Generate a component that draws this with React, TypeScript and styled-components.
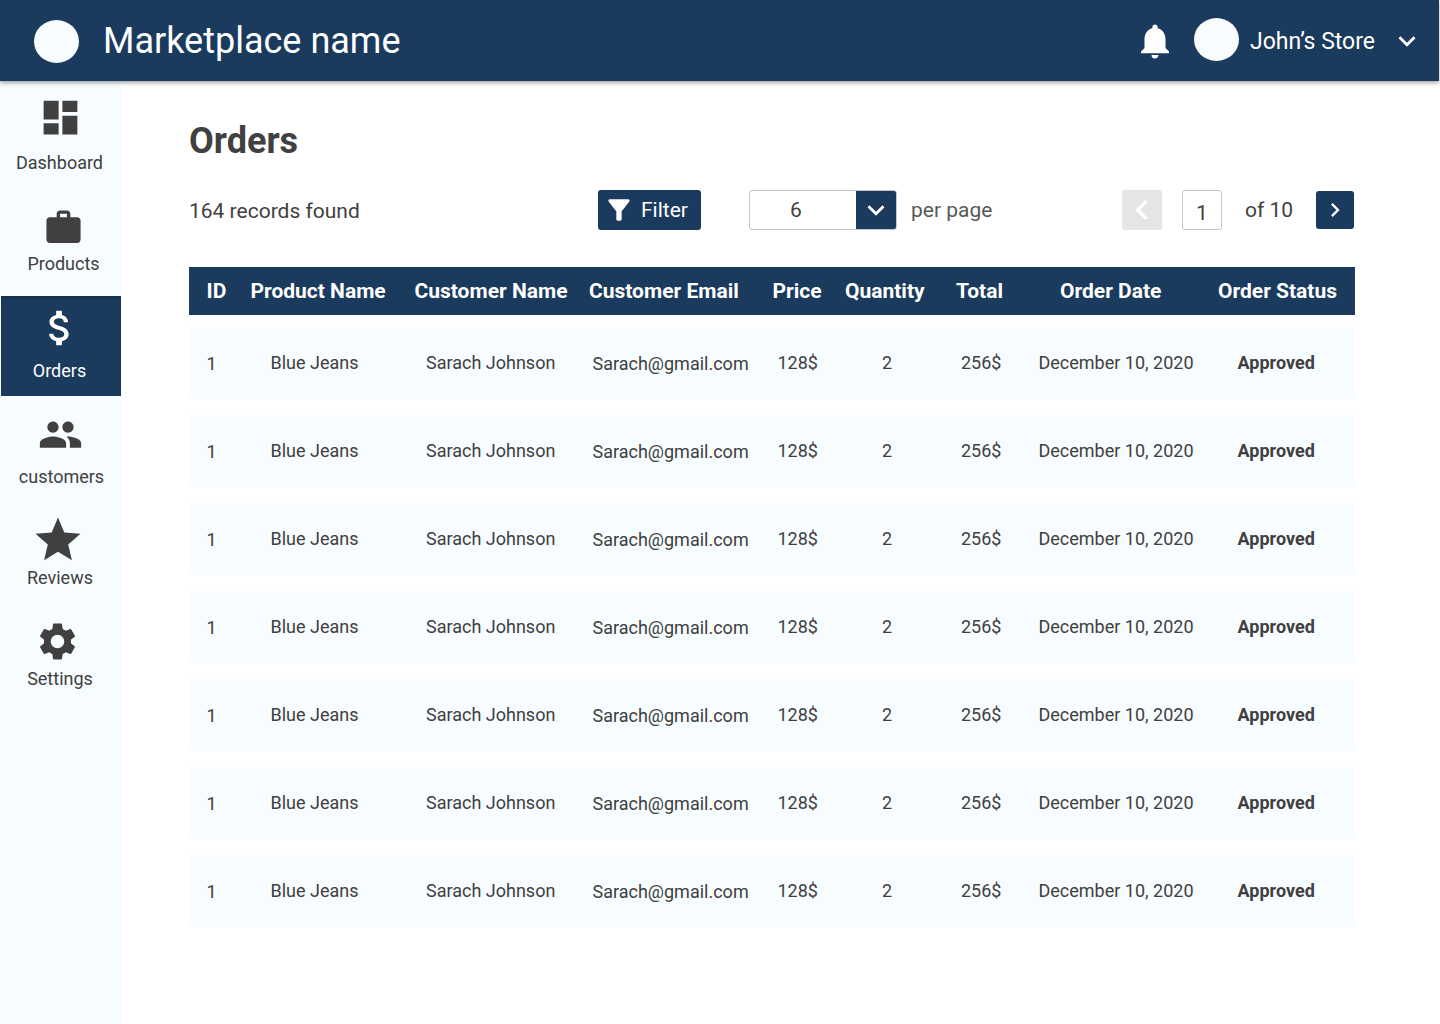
import React from 'react';
import styled, { createGlobalStyle } from 'styled-components';
import {
  MdAttachMoney,
  MdChevronLeft,
  MdChevronRight,
  MdDashboard,
  MdFilterAlt,
  MdKeyboardArrowDown,
  MdNotifications,
  MdPeople,
  MdSettings,
  MdStar,
  MdWork,
} from 'react-icons/md';

const navy = '#1A3A5E';
const ink = '#404040';
const tint = '#F7FCFF';

const navItems = [
  { label: 'Dashboard', Icon: MdDashboard, size: 45, height: 114, top: 14, gap: 11, iconShift: 0, labelShift: -2 },
  { label: 'Products', Icon: MdWork, size: 41, height: 101, top: 12, gap: 4, iconShift: 6, labelShift: 6 },
  { label: 'Orders', Icon: MdAttachMoney, size: 46, height: 100, top: 9, gap: 8, iconShift: -2, labelShift: -3, active: true },
  { label: 'customers', Icon: MdPeople, size: 45, height: 101, top: 16, gap: 8, iconShift: 0, labelShift: 2 },
  { label: 'Reviews', Icon: MdStar, size: 54, height: 101, top: 16, gap: -1, iconShift: -6, labelShift: -1 },
  { label: 'Settings', Icon: MdSettings, size: 45, height: 101, top: 21, gap: 3, iconShift: -7, labelShift: -1 },
];

const headers = [
  'ID',
  'Product Name',
  'Customer Name',
  'Customer Email',
  'Price',
  'Quantity',
  'Total',
  'Order Date',
  'Order Status',
];

const orders = Array.from({ length: 7 }, () => ({
  id: '1',
  product: 'Blue Jeans',
  customer: 'Sarach Johnson',
  email: 'Sarach@gmail.com',
  price: '128$',
  quantity: '2',
  total: '256$',
  date: 'December 10, 2020',
  status: 'Approved',
}));

export default function App() {
  return (
    <>
      <GlobalStyle />
      <Page>
        <Header>
          <Brand>
            <BrandLogo />
            <BrandName>Marketplace name</BrandName>
          </Brand>
          <Account>
            <BellIcon size={42} />
            <StoreAvatar />
            <StoreName>John’s Store</StoreName>
            <MdKeyboardArrowDown size={34} />
          </Account>
        </Header>

        <Body>
          <Sidebar>
            {navItems.map(({ label, Icon, size, height, top, gap, iconShift, labelShift, active }) => (
              <NavItem key={label} $height={height} $top={top} $active={active}>
                <NavIcon $shift={iconShift}>
                  <Icon size={size} />
                </NavIcon>
                <NavLabel $gap={gap} $shift={labelShift}>
                  {label}
                </NavLabel>
              </NavItem>
            ))}
          </Sidebar>

          <Main>
            <Title>Orders</Title>

            <Toolbar>
              <Records>164 records found</Records>
              <FilterButton type="button">
                <MdFilterAlt size={32} />
                Filter
              </FilterButton>
              <PerPageSelect>
                <SelectValue>6</SelectValue>
                <SelectArrow>
                  <MdKeyboardArrowDown size={34} />
                </SelectArrow>
              </PerPageSelect>
              <PerPageLabel>per page</PerPageLabel>
              <PrevButton type="button">
                <MdChevronLeft size={40} />
              </PrevButton>
              <PageBox>1</PageBox>
              <PageCount>of 10</PageCount>
              <NextButton type="button">
                <MdChevronRight size={28} />
              </NextButton>
            </Toolbar>

            <HeadRow>
              {headers.map((name) => (
                <HeadCell key={name}>{name}</HeadCell>
              ))}
            </HeadRow>

            <Rows>
              {orders.map((order, i) => (
                <OrderRow key={i}>
                  <LowCell>{order.id}</LowCell>
                  <Cell>{order.product}</Cell>
                  <Cell>{order.customer}</Cell>
                  <LowCell>{order.email}</LowCell>
                  <Cell>{order.price}</Cell>
                  <Cell>{order.quantity}</Cell>
                  <Cell>{order.total}</Cell>
                  <Cell>{order.date}</Cell>
                  <StatusCell>{order.status}</StatusCell>
                </OrderRow>
              ))}
            </Rows>
          </Main>
        </Body>
      </Page>
    </>
  );
}

const GlobalStyle = createGlobalStyle`
  * {
    box-sizing: border-box;
  }

  body {
    margin: 0;
    background: #fff;
    color: ${ink};
    font-family: Roboto, "Liberation Sans", sans-serif;
  }
`;

const Page = styled.div`
  width: 1440px;
  height: 1024px;
  display: flex;
  flex-direction: column;
  overflow: hidden;
`;

const Header = styled.header`
  position: relative;
  z-index: 1;
  flex: none;
  width: 1439px;
  height: 81px;
  padding: 0 15px 0 34px;
  display: flex;
  align-items: center;
  justify-content: space-between;
  background: ${navy};
  color: #fff;
  box-shadow: 0 2px 4px rgba(0, 0, 0, 0.35);
`;

const Brand = styled.div`
  display: flex;
  align-items: center;
  gap: 24px;
`;

const Avatar = styled.div`
  width: 45px;
  height: 43px;
  border-radius: 50%;
  background: ${tint};
`;

const BrandLogo = styled(Avatar)`
  margin-top: 2px;
`;

const StoreAvatar = styled(Avatar)`
  margin: 0 0 2px 18px;
`;

const BrandName = styled.div`
  font-size: 36px;
  line-height: 42px;
`;

const Account = styled.div`
  display: flex;
  align-items: center;
`;

const BellIcon = styled(MdNotifications)`
  display: block;
`;

const StoreName = styled.div`
  margin: 2px 15px 0 11px;
  font-size: 23px;
  line-height: 28px;
`;

const Body = styled.div`
  flex: 1;
  display: flex;
`;

const Sidebar = styled.nav`
  flex: none;
  width: 121px;
  background: ${tint};
`;

const NavItem = styled.a<{ $height: number; $top: number; $active?: boolean }>`
  height: ${(p) => p.$height}px;
  margin-left: ${(p) => (p.$active ? 1 : 0)}px;
  padding-top: ${(p) => p.$top}px;
  display: flex;
  flex-direction: column;
  align-items: center;
  background: ${(p) => (p.$active ? navy : 'transparent')};
  color: ${(p) => (p.$active ? '#fff' : ink)};
  box-shadow: ${(p) => (p.$active ? 'inset 0 2px 2px rgba(0, 0, 0, 0.2)' : 'none')};
`;

const NavIcon = styled.span<{ $shift: number }>`
  display: flex;
  margin-left: ${(p) => p.$shift}px;
`;

const NavLabel = styled.span<{ $gap: number; $shift: number }>`
  margin-top: ${(p) => p.$gap}px;
  margin-left: ${(p) => p.$shift}px;
  font-size: 18px;
  line-height: 24px;
`;

const Main = styled.main`
  flex: 1;
  padding: 39px 0 0 68px;
`;

const Title = styled.h1`
  margin: 0 0 28px;
  font-size: 36px;
  font-weight: 700;
  line-height: 42px;
`;

const Toolbar = styled.div`
  width: 1165px;
  height: 40px;
  display: flex;
  align-items: center;
`;

const Records = styled.div`
  width: 409px;
  padding-top: 2px;
  font-size: 21px;
`;

const FilterButton = styled.button`
  width: 103px;
  height: 40px;
  padding: 0 0 0 5px;
  display: flex;
  align-items: center;
  gap: 6px;
  border: none;
  border-radius: 3px;
  background: ${navy};
  color: #fff;
  font: 400 21px Roboto, sans-serif;
`;

const PerPageSelect = styled.div`
  width: 148px;
  height: 40px;
  margin-left: 48px;
  display: flex;
  border: 1px solid #c4c4c4;
  border-radius: 3px;
  overflow: hidden;
`;

const SelectValue = styled.div`
  flex: 1;
  padding-right: 14px;
  display: flex;
  align-items: center;
  justify-content: center;
  font-size: 21px;
`;

const SelectArrow = styled.div`
  width: 40px;
  display: flex;
  align-items: center;
  justify-content: center;
  background: ${navy};
  color: #fff;
`;

const PerPageLabel = styled.div`
  width: 211px;
  margin-left: 14px;
  font-size: 21px;
  color: #595959;
`;

const PrevButton = styled.button`
  width: 40px;
  height: 40px;
  padding: 0;
  display: flex;
  align-items: center;
  justify-content: center;
  border: none;
  border-radius: 3px;
  background: #e5e5e5;
  color: #fff;
`;

const PageBox = styled.div`
  width: 40px;
  height: 40px;
  margin-left: 20px;
  padding-top: 6px;
  display: flex;
  align-items: center;
  justify-content: center;
  border: 1px solid #c4c4c4;
  border-radius: 3px;
  font-size: 21px;
`;

const PageCount = styled.div`
  width: 71px;
  margin-left: 23px;
  font-size: 21px;
`;

const NextButton = styled.button`
  width: 38px;
  height: 38px;
  padding: 0;
  display: flex;
  align-items: center;
  justify-content: center;
  border: none;
  border-radius: 3px;
  background: ${navy};
  color: #fff;
`;

const HeadRow = styled.div`
  width: 1166px;
  height: 48px;
  margin-top: 37px;
  padding-left: 17.5px;
  display: grid;
  grid-template-columns: 44px 164px 174.5px 183.5px 72.5px 111px 104px 158px 1fr;
  align-items: center;
  background: ${navy};
  color: #fff;
`;

const HeadCell = styled.div`
  font-size: 21px;
  font-weight: 700;
  white-space: nowrap;
`;

const Rows = styled.div`
  width: 1166px;
  margin-top: 12px;
  display: flex;
  flex-direction: column;
  gap: 16px;
`;

const OrderRow = styled.div`
  height: 72px;
  padding: 0 0 2px 17.5px;
  display: grid;
  grid-template-columns: 64px 155.5px 166.5px 185px 104.5px 79px 77.5px 199px 1fr;
  align-items: center;
  background: ${tint};
`;

const Cell = styled.div`
  font-size: 18px;
  white-space: nowrap;
`;

const LowCell = styled(Cell)`
  margin-top: 2px;
`;

const StatusCell = styled(Cell)`
  font-weight: 700;
`;
